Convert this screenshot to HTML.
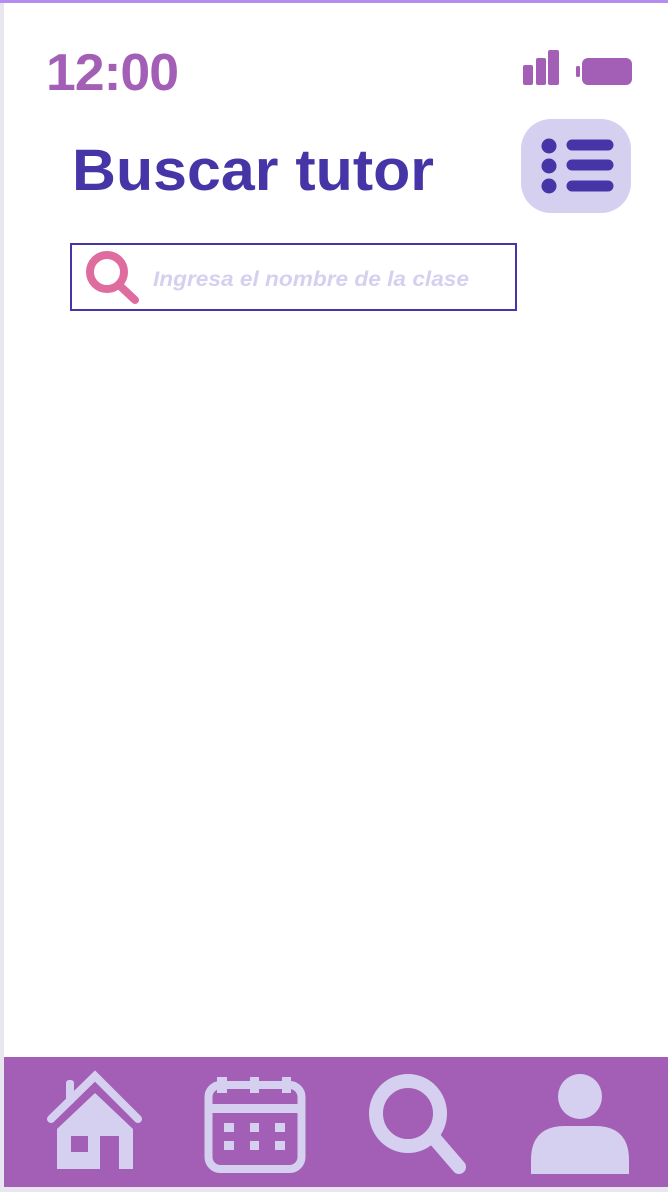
<!DOCTYPE html>
<html><head><meta charset="utf-8"><style>
html,body{margin:0;padding:0;width:668px;height:1192px;overflow:hidden;background:#e8e6ee;}
svg{display:block}
</style></head><body>
<svg width="668" height="1192" viewBox="0 0 668 1192" xmlns="http://www.w3.org/2000/svg">
<rect x="4" y="0" width="664" height="1187" fill="#ffffff"/>
<rect x="0" y="0" width="668" height="3" fill="#b48cf2"/>
<text x="46" y="90" font-family="Liberation Sans, sans-serif" font-weight="bold" font-size="52" fill="#a35fb5" letter-spacing="-1" textLength="132" lengthAdjust="spacingAndGlyphs">12:00</text>
<rect x="523" y="65" width="10" height="20" rx="2" fill="#a35fb5"/>
<rect x="536" y="58" width="10" height="27" rx="2" fill="#a35fb5"/>
<rect x="548" y="50" width="11" height="35" rx="2" fill="#a35fb5"/>
<rect x="576" y="66" width="4" height="11" rx="1.5" fill="#a35fb5"/>
<rect x="582" y="58" width="50" height="27" rx="6" fill="#a35fb5"/>
<text x="72" y="190" font-family="Liberation Sans, sans-serif" font-weight="bold" font-size="58" fill="#4535a6" textLength="362" lengthAdjust="spacingAndGlyphs">Buscar tutor</text>
<rect x="521" y="119" width="110" height="94" rx="30" fill="#d6d0f0"/>
<circle cx="549" cy="146" r="7.5" fill="#4535a6"/>
<circle cx="549" cy="166" r="7.5" fill="#4535a6"/>
<circle cx="549" cy="186" r="7.5" fill="#4535a6"/>
<line x1="572" y1="145" x2="608" y2="145" stroke="#4535a6" stroke-width="11" stroke-linecap="round"/>
<line x1="572" y1="165" x2="608" y2="165" stroke="#4535a6" stroke-width="11" stroke-linecap="round"/>
<line x1="572" y1="186" x2="608" y2="186" stroke="#4535a6" stroke-width="11" stroke-linecap="round"/>
<rect x="71" y="244" width="445" height="66" fill="none" stroke="#4535a6" stroke-width="2"/>
<ellipse cx="107" cy="272" rx="17" ry="17" fill="none" stroke="#df6c9e" stroke-width="8"/>
<line x1="119" y1="285" x2="135" y2="300" stroke="#df6c9e" stroke-width="8" stroke-linecap="round"/>
<text x="153" y="286" font-family="Liberation Sans, sans-serif" font-weight="bold" font-style="italic" font-size="21" fill="#d6d0f0" textLength="316" lengthAdjust="spacingAndGlyphs">Ingresa el nombre de la clase</text>
<rect x="4" y="1057" width="664" height="130" fill="#a35fb5"/>
<g fill="#d6d0f0" stroke="none">
<path d="M57 1129 L95 1093 L133 1129 L133 1169 L119 1169 L119 1136 L100 1136 L100 1169 L57 1169 Z M71 1136 L71 1152 L88 1152 L88 1136 Z" fill-rule="evenodd"/>
<rect x="66" y="1080" width="8" height="24" rx="3"/>
</g>
<path d="M51 1119 L95 1076 L138 1119" fill="none" stroke="#d6d0f0" stroke-width="8" stroke-linecap="round" stroke-linejoin="miter"/>
<rect x="208.5" y="1085" width="93" height="84" rx="12" fill="none" stroke="#d6d0f0" stroke-width="8"/>
<rect x="206" y="1104" width="98" height="9" fill="#d6d0f0"/>
<rect x="217" y="1077" width="10" height="16" fill="#d6d0f0"/>
<rect x="250" y="1077" width="9" height="16" fill="#d6d0f0"/>
<rect x="282" y="1077" width="9" height="16" fill="#d6d0f0"/>
<g fill="#d6d0f0">
<rect x="224" y="1123" width="10" height="9"/><rect x="250" y="1123" width="9" height="9"/><rect x="275" y="1123" width="10" height="9"/>
<rect x="224" y="1141" width="10" height="9"/><rect x="250" y="1141" width="9" height="9"/><rect x="275" y="1141" width="10" height="9"/>
</g>
<ellipse cx="408" cy="1113.5" rx="32" ry="32.5" fill="none" stroke="#d6d0f0" stroke-width="14"/>
<line x1="434" y1="1138" x2="459" y2="1167" stroke="#d6d0f0" stroke-width="14" stroke-linecap="round"/>
<ellipse cx="580" cy="1096.5" rx="22" ry="22.5" fill="#d6d0f0"/>
<path d="M531 1174 L531 1160 Q531 1126 565 1126 L595 1126 Q629 1126 629 1160 L629 1174 Z" fill="#d6d0f0"/>
</svg>
</body></html>
